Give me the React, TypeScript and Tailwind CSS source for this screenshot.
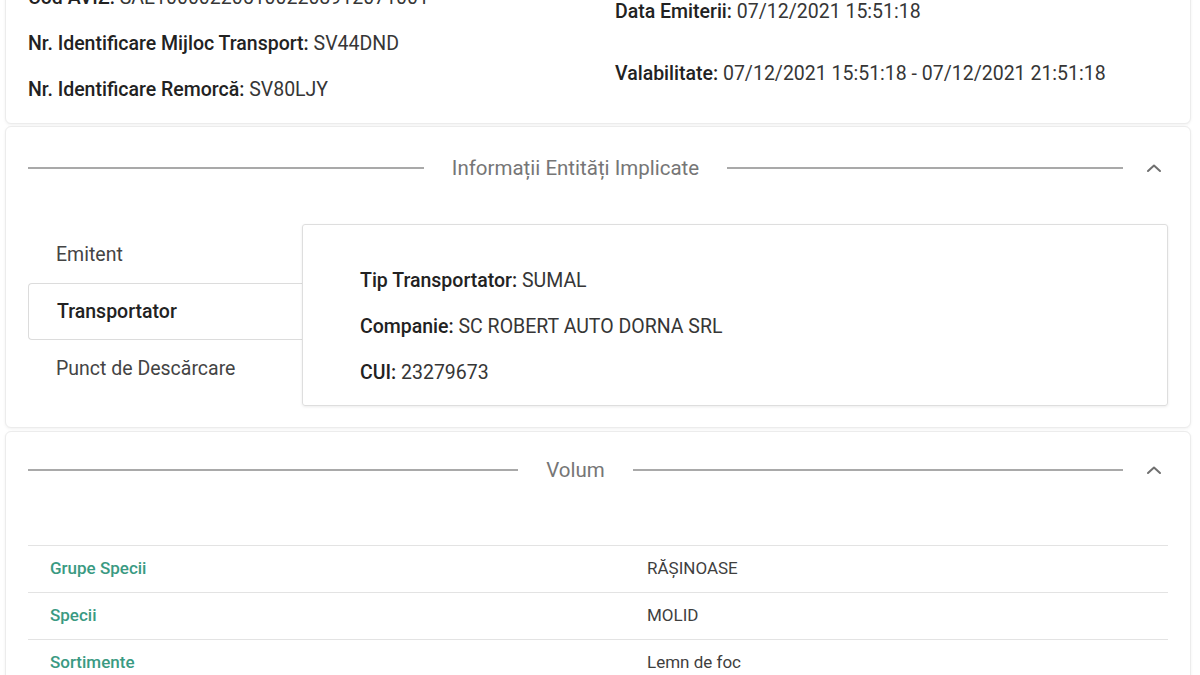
import React, { useState } from 'react'

const font = { fontFamily: 'Roboto, "Noto Sans", Arial, sans-serif' }

const Field = ({ label, value }: { label: string; value: string }) => (
	<p className="text-[19.5px] leading-6 text-[#363636] whitespace-nowrap">
		<span className="font-medium text-[#222]">{label}</span> {value}
	</p>
)

const ChevronUp = () => (
	<svg width="16" height="10" viewBox="0 0 16 10" fill="none">
		<path d="M2 8 L8 2.5 L14 8" stroke="#6f6f6f" strokeWidth="2" strokeLinecap="round" strokeLinejoin="round" />
	</svg>
)

const SectionHeader = ({ title }: { title: string }) => (
	<div className="flex items-center h-6">
		<div className="flex-1 h-[2px] bg-[#a9a9a9]" />
		<p className="px-7 text-[20.5px] leading-6 text-[#767676] whitespace-nowrap">{title}</p>
		<div className="flex-1 h-[2px] bg-[#a9a9a9]" />
		<div className="ml-[23px] mr-[6px] w-4 flex items-center justify-center">
			<ChevronUp />
		</div>
	</div>
)

const Card = ({ className, children }: { className?: string; children: React.ReactNode }) => (
	<div className={`bg-white border border-[#ececec] rounded-md shadow-[0_1px_3px_rgba(0,0,0,0.06)] ${className || ''}`}>
		{children}
	</div>
)

const tabs = ['Emitent', 'Transportator', 'Punct de Descărcare']

const volumRows = [
	{ label: 'Grupe Specii', value: 'RĂȘINOASE' },
	{ label: 'Specii', value: 'MOLID' },
	{ label: 'Sortimente', value: 'Lemn de foc' },
]

export default function App() {
	const [activeTab, setActiveTab] = useState(1)

	return (
		<div className="w-[1200px] h-[675px] overflow-hidden bg-white pl-[5px] pr-[9px]" style={font}>
			{/* aviz details */}
			<Card className="-mt-[30px] flex pl-[22px] pr-[22px] pb-[21px]">
				<div className="w-[587px] pt-[15px] flex flex-col gap-[22px]">
					<Field label="Cod AVIZ:" value="SAE1000022051002203912071001" />
					<Field label="Nr. Identificare Mijloc Transport:" value="SV44DND" />
					<Field label="Nr. Identificare Remorcă:" value="SV80LJY" />
				</div>
				<div className="flex-1 pt-[29px] flex flex-col gap-[38px]">
					<Field label="Data Emiterii:" value="07/12/2021 15:51:18" />
					<Field label="Valabilitate:" value="07/12/2021 15:51:18 - 07/12/2021 21:51:18" />
				</div>
			</Card>

			{/* entitati implicate */}
			<Card className="mt-[2px] pl-[22px] pr-[22px] pt-[29px] pb-[21px]">
				<SectionHeader title="Informații Entități Implicate" />
				<div className="mt-[44px] flex">
					<div className="w-[274px] pt-[2px] flex flex-col">
						{tabs.map((tab, idx) => (
							<button
								key={tab}
								onClick={() => setActiveTab(idx)}
								className={`h-[57px] pl-[28px] text-left text-[19.5px] ${
									idx === activeTab
										? 'border border-r-0 border-[#dcdcdc] rounded-l-[4px] font-medium text-[#222]'
										: 'text-[#444]'
								}`}
							>
								{tab}
							</button>
						))}
					</div>
					<div className="flex-1 h-[182px] border border-[#dedede] rounded-[3px] shadow-[0_1px_3px_rgba(0,0,0,0.08)] pl-[57px] pt-[44px] flex flex-col gap-[22px]">
						<Field label="Tip Transportator:" value="SUMAL" />
						<Field label="Companie:" value="SC ROBERT AUTO DORNA SRL" />
						<Field label="CUI:" value="23279673" />
					</div>
				</div>
			</Card>

			{/* volum */}
			<Card className="mt-[3px] pl-[22px] pr-[22px] pt-[26px] pb-6">
				<SectionHeader title="Volum" />
				<div className="mt-[63px] border-t border-[#e3e3e3]">
					{volumRows.map((row) => (
						<div key={row.label} className="flex items-center h-[47px] border-b border-[#e3e3e3] text-[17px]">
							<div className="w-[619px] pl-[22px] font-medium text-[#3a9a82]">{row.label}</div>
							<div className="flex-1 text-[#3f3f3f]">{row.value}</div>
						</div>
					))}
				</div>
			</Card>
		</div>
	)
}
